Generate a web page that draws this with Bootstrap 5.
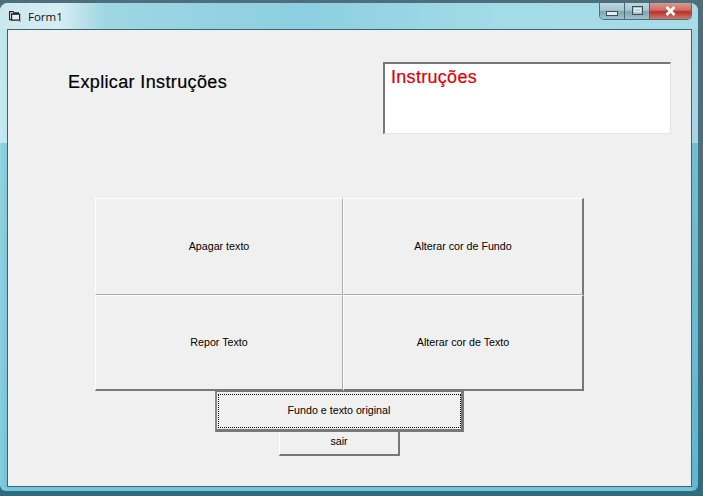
<!DOCTYPE html>
<html lang="pt">
<head>
<meta charset="utf-8">
<title>Form1</title>
<link href="https://cdn.jsdelivr.net/npm/bootstrap@5.3.0/dist/css/bootstrap.min.css" rel="stylesheet">
<style>
html,body{margin:0;padding:0;background:#3f6c7a;}
.win-stage{width:703px;height:496px;overflow:hidden;background:linear-gradient(180deg,#4d6e7a 0,#476f7d 300px,#2f6c7e 100%);}
.win-frame{width:698px;height:488px;margin-top:3px;border-radius:8px 8px 6px 6px;overflow:hidden;
  background:linear-gradient(90deg,rgba(255,255,255,.16) 0,rgba(255,255,255,0) 7px,rgba(255,255,255,0) 691px,rgba(0,90,140,.12) 692px),
  linear-gradient(180deg,#b9e3ec 0,#bfe6ef 140px,#82cbdc 140px,#6fc3d9 484px,#78c8dc 100%);}
.win-title{height:26px;padding:0 6px 0 9px;
  background:linear-gradient(90deg,#cbe8ee 0,#d6edf2 60px,#9fd6e3 105px,#8ccfe0 300px,#a3dbe7 500px,#a8dde8 100%);}
.win-label{height:26px;}
.win-caption{font:11.5px "Open Sans","Noto Sans",sans-serif;color:#111;margin-left:7px;}
.win-icon{width:12px;height:12px;}
.win-ctrls{height:17px;border:1px solid #48707c;border-top:0;border-radius:0 0 5px 5px;overflow:hidden;}
.ctl-btn{height:16px;display:flex;justify-content:center;border-right:1px solid #3f6f7d;}
.ctl-min{width:25px;padding-top:8px;background:linear-gradient(180deg,#bcd8e0 0,#a6c6d0 45%,#7fa3b0 55%,#a3c2cc 100%);}
.ctl-max{width:25px;padding-top:3px;background:linear-gradient(180deg,#bcd8e0 0,#a6c6d0 45%,#7fa3b0 55%,#a3c2cc 100%);}
.ctl-close{width:41px;padding-top:3px;border-right:0;background:linear-gradient(180deg,#dd9a90 0,#cc6a60 45%,#b8302a 55%,#d07a6e 100%);}
.client-area{width:685px;height:458px;margin-left:7px;background:#f0f0f0;border:1px solid #3b6472;}
.top-zone{height:168px;padding:32px 20px 0 60px;}
.lbl-explain{font:18px/1 "Liberation Sans",sans-serif;letter-spacing:.37px;color:#000;margin-top:11px;-webkit-text-stroke:.2px #000;}
.txt-box{width:288px;height:72px;background:#fff;border-top:2px solid #777;border-left:2px solid #777;border-right:1px solid #e4e4e4;border-bottom:1px solid #e4e4e4;
  padding:3px 6px;font:18px/1.2 "Liberation Sans",sans-serif;letter-spacing:.3px;color:#e00000;-webkit-text-stroke:.2px #e00000;}
.vb-btn.btn{--bs-btn-border-radius:0;--bs-btn-padding-x:0;--bs-btn-padding-y:0;--bs-btn-border-width:0;
  font:10.7px "Liberation Sans",sans-serif;color:#000;background:#f0f0f0;
  border-style:solid;border-color:#fff #777 #777 #fff;border-width:1px 2px 2px 1px;display:flex;align-items:center;justify-content:center;}
.pad-grid{display:grid;grid-template-columns:248px 241px;grid-template-rows:97px 96px;width:489px;margin-left:87px;}
.pad-grid .vb-btn.btn:nth-child(1){border-color:#fff #aaa #aaa #fff;border-width:1px;padding-bottom:2px;}
.pad-grid .vb-btn.btn:nth-child(2){border-color:#fff #777 #aaa #fff;border-width:1px 2px 1px 1px;padding-bottom:2px;}
.pad-grid .vb-btn.btn:nth-child(3){border-color:#fff #aaa #777 #fff;border-width:1px 1px 2px 1px;padding-bottom:2px;}
.pad-grid .vb-btn.btn:nth-child(4){padding-bottom:2px;}
.btn-default-wrap{width:249px;height:40px;margin-left:207px;}
.vb-btn.btn.is-default{width:249px;height:41px;border-color:#777 #777 #777 #888;border-width:1px 3px 3px 2px;position:relative;padding-bottom:2px;}
.focus-dots{position:absolute;inset:2px 0 1px 1px;border:1px dotted #000;}
.vb-btn.btn.is-small{width:121px;height:25px;margin-left:271px;padding-bottom:4px;}
</style>
</head>
<body>
<div class="win-stage">
<div class="win-frame d-flex flex-column">
  <div class="win-title d-flex align-items-start justify-content-between">
    <div class="win-label d-flex align-items-center">
      <svg class="win-icon" viewBox="0 0 12 12" fill="none" stroke="#222" stroke-width="1.2">
        <path d="M.6 1.6h3.4l1 1.2h4.4v1.3H2.6v5.6H.6z" fill="#fff"/>
        <path d="M2.6 4.2h8v6H2.6z" fill="#e8eef0"/>
        <path d="M10.5 11.4h1.2" stroke="#777"/>
      </svg>
      <span class="win-caption">Form1</span>
    </div>
    <div class="win-ctrls d-flex">
      <div class="ctl-btn ctl-min"><svg width="12" height="5" viewBox="0 0 12 5"><rect x=".5" y=".5" width="11" height="4" fill="#e4edf0" stroke="#3c4f57"/></svg></div>
      <div class="ctl-btn ctl-max"><svg width="11" height="9" viewBox="0 0 11 9"><rect x=".5" y=".5" width="10" height="8" fill="#a9c6cf" stroke="#3c4f57"/><rect x="2.5" y="2.5" width="6" height="3" fill="#bcd3da" stroke="#e4edf0"/></svg></div>
      <div class="ctl-btn ctl-close"><svg width="11" height="10" viewBox="0 0 11 10"><path d="M1.5 1l8 8M9.5 1l-8 8" stroke="#fff" stroke-width="2.8"/></svg></div>
    </div>
  </div>
  <div class="client-area">
    <div class="top-zone d-flex justify-content-between align-items-start">
      <div class="lbl-explain">Explicar Instruções</div>
      <div class="txt-box">Instruções</div>
    </div>
    <div class="pad-grid">
      <button class="btn vb-btn" type="button">Apagar texto</button>
      <button class="btn vb-btn" type="button">Alterar cor de Fundo</button>
      <button class="btn vb-btn" type="button">Repor Texto</button>
      <button class="btn vb-btn" type="button">Alterar cor de Texto</button>
    </div>
    <div class="btn-default-wrap">
      <button class="btn vb-btn is-default" type="button"><span class="focus-dots"></span>Fundo e texto original</button>
    </div>
    <button class="btn vb-btn is-small" type="button">sair</button>
  </div>
</div>
</div>
<script src="https://cdn.jsdelivr.net/npm/bootstrap@5.3.0/dist/js/bootstrap.bundle.min.js"></script>
</body>
</html>
